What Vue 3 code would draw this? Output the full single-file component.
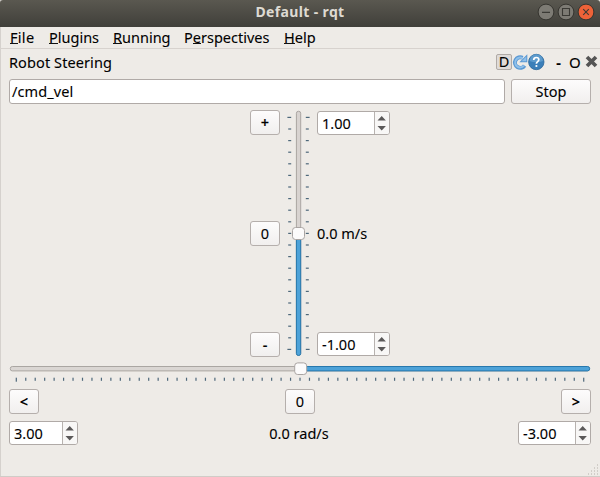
<script setup>
const menus = [
  { pre: '', key: 'F', post: 'ile', cls: 'file' },
  { pre: '', key: 'P', post: 'lugins', cls: 'plugins' },
  { pre: '', key: 'R', post: 'unning', cls: 'running' },
  { pre: 'P', key: 'e', post: 'rspectives', cls: 'persp' },
  { pre: '', key: 'H', post: 'elp', cls: 'help' },
]
const vTicks = Array.from({ length: 21 }, (_, i) => ({ y: 7.3 + i * 11.6, end: i === 0 || i === 20 }))
const hTicks = Array.from({ length: 61 }, (_, i) => ({ x: 7.3 + i * 9.457, end: i === 0 || i === 60 }))
</script>

<template>
  <div class="window">
    <header class="titlebar">
      <h1>Default - rqt</h1>
      <svg class="controls" width="60" height="20" viewBox="0 0 60 20">
        <g stroke="#35342f" stroke-width="1">
          <circle cx="10" cy="10" r="7.9" fill="#7d7b74" />
          <circle cx="30" cy="10" r="7.9" fill="#7d7b74" />
          <circle cx="50" cy="10" r="7.9" fill="#ee6238" />
        </g>
        <g fill="none" stroke="#3b3a35" stroke-width="1.1">
          <path d="M6 10.4h8M26.5 6.5h7v7h-7z" />
          <path d="M47.2 7.2l5.6 5.6M52.8 7.2l-5.6 5.6" />
        </g>
      </svg>
    </header>

    <nav class="menubar">
      <span v-for="m in menus" :key="m.cls" :class="['menu', m.cls]">{{ m.pre }}<u>{{ m.key }}</u>{{ m.post }}</span>
    </nav>

    <div class="dock">
      <span class="dock-title">Robot Steering</span>
      <span class="dbtn">D</span>
      <svg class="dock-icons" width="34" height="18" viewBox="0 0 34 18">
        <path d="M12.600 12.600A5.300 5.300 0 1 1 10.600 4.800" fill="none" stroke="#5a98d3" stroke-width="4" />
        <path d="M15.300 1.200v8H7.300z" fill="#5a98d3" />
        <path d="M11.800 12.700A4.900 4.900 0 1 1 10.600 5.300" fill="none" stroke="#8fc0ea" stroke-width="2" />
        <path d="M14.300 3.600v4.600H9.700z" fill="#8fc0ea" />
        <circle cx="24.300" cy="9" r="7.700" fill="#3b7fb9" stroke="#2c6799" stroke-width=".8" />
        <path d="M17.600 8a6.700 6.700 0 0 1 13.400 0q-6.700 2.400-13.400 0z" fill="#5d9bcd" />
        <path d="M21.700 7q.1-2.500 2.600-2.500t2.500 2.200c0 1.800-2.400 1.900-2.400 4" fill="none" stroke="#fff" stroke-width="1.700" />
        <circle cx="24.400" cy="13" r="1.100" fill="#fff" />
      </svg>
      <span class="minus">-</span>
      <span class="oh">O</span>
      <svg class="close" width="13" height="13" viewBox="0 0 13 13">
        <path d="M2 2l9 9M11 2l-9 9" stroke="#555" stroke-width="3.700" />
      </svg>
    </div>

    <div class="topic">
      <div class="field">/cmd_vel</div>
      <button class="btn stop">Stop</button>
    </div>

    <section class="linear">
      <div class="col">
        <button class="btn sign">+</button>
        <button class="btn">0</button>
        <button class="btn sign">-</button>
      </div>
      <svg class="vslider" width="25" height="247" viewBox="0 0 25 247">
        <g fill="#4e687b">
          <template v-for="t in vTicks" :key="t.y">
            <rect :x="t.end ? 1.4 : 2.2" :y="t.y - 0.5" :width="t.end ? 3.8 : 3" height="1.200" />
            <rect x="19.800" :y="t.y - 0.5" :width="t.end ? 3.8 : 3" height="1.200" />
          </template>
        </g>
        <rect x="10.400" y="1.300" width="4.300" height="244" rx="2" fill="#d8d3d0" stroke="#aaa5a2" />
        <path d="M10.400 124h4.300v119.500q0 2-2.150 2t-2.150-2z" fill="#4da2d8" stroke="#2778ad" />
        <rect x="6.500" y="117.500" width="12" height="12" rx="3" fill="#fcfbfb" stroke="#a9a4a2" />
      </svg>
      <div class="col values">
        <div class="spin">
          <span class="num">1.00</span>
          <svg viewBox="0 0 14 22"><path d="M2.500 8.500l4.200-4.600 4.200 4.600zM2.500 14h8.400l-4.200 4.600z" fill="#5b5959" /></svg>
        </div>
        <span class="speed">0.0 m/s</span>
        <div class="spin">
          <span class="num">-1.00</span>
          <svg viewBox="0 0 14 22"><path d="M2.500 8.500l4.200-4.600 4.200 4.600zM2.500 14h8.400l-4.200 4.600z" fill="#5b5959" /></svg>
        </div>
      </div>
    </section>

    <svg class="hslider" width="582" height="22" viewBox="0 0 582 22">
      <rect x="1.300" y="4.500" width="579" height="4.400" rx="2" fill="#dad6d3" stroke="#aaa6a2" />
      <path d="M291 4.500h287.500q2.200 0 2.200 2.200t-2.200 2.200h-287.500z" fill="#4da2d8" stroke="#2778ad" />
      <rect x="285.700" y=".9" width="12" height="11.600" rx="3" fill="#fcfbfb" stroke="#a9a4a2" />
      <g fill="#4e687b">
        <rect v-for="t in hTicks" :key="t.x" :x="t.x - 0.6" y="15.700" width="1.200" :height="t.end ? 4 : 3.1" />
      </g>
    </svg>

    <div class="turn">
      <button class="btn sign">&lt;</button>
      <button class="btn">0</button>
      <button class="btn sign">&gt;</button>
    </div>

    <div class="angular">
      <div class="spin narrow">
        <span class="num">3.00</span>
        <svg viewBox="0 0 14 22"><path d="M2.500 8.500l4.200-4.600 4.200 4.600zM2.500 14h8.400l-4.200 4.600z" fill="#5b5959" /></svg>
      </div>
      <span class="rad">0.0 rad/s</span>
      <div class="spin">
        <span class="num">-3.00</span>
        <svg viewBox="0 0 14 22"><path d="M2.500 8.500l4.200-4.600 4.200 4.600zM2.500 14h8.400l-4.200 4.600z" fill="#5b5959" /></svg>
      </div>
    </div>

    <svg class="grip" width="12" height="12" viewBox="0 0 12 12">
      <path d="M10 1h1M7 4h1M10 4h1M4 7h1M7 7h1M10 7h1M1 10h1M4 10h1M7 10h1M10 10h1" stroke="#b5b0aa" />
    </svg>
  </div>
</template>

<style>
html,
body {
  background: #eeebe7;
  overflow: hidden;
}
</style>

<style scoped>
.window {
  position: relative;
  box-sizing: border-box;
  width: 600px;
  height: 477px;
  background: #eeebe7;
  border-bottom: 1px solid #d0ccc7;
  box-shadow: inset 1px 0 #d5d1cd;
  font-family: "Noto Sans", sans-serif;
  font-size: 14.5px;
  line-height: 20px;
  color: #000;
  -webkit-text-stroke: .1px #000;
  white-space: nowrap;
  overflow: hidden;
}
.titlebar {
  display: grid;
  grid-template-columns: 1fr auto 1fr;
  align-items: center;
  height: 27px;
  box-sizing: border-box;
  padding-right: 4px;
  background: linear-gradient(#5a5850, #403f3a);
  border-radius: 3px 3px 0 0;
}
h1 {
  grid-column: 2;
  margin: 0 0 3px 4px;
  font-size: 14px;
  line-height: 20px;
  font-weight: 700;
  color: #dedad2;
  letter-spacing: .36px;
  -webkit-text-stroke: 0;
}
.controls {
  justify-self: end;
  margin-bottom: 3px;
}
.menubar {
  display: flex;
  box-sizing: border-box;
  height: 22px;
  padding-left: 10px;
  border-bottom: 1px solid #d7d2ce;
}
.menu {
  line-height: 21px;
}
.menu u {
  text-decoration: none;
  display: inline-block;
  height: 16px;
  border-bottom: 1px solid #111;
  line-height: 21px;
}
.file { width: 39px; letter-spacing: .3px; }
.plugins { width: 64px; }
.running { width: 71px; }
.persp { width: 100px; }
.dock {
  display: flex;
  align-items: center;
  height: 30px;
  box-sizing: border-box;
  padding: 0 2px 3px 9px;
}
.dock-title {
  flex: 1;
  letter-spacing: .1px;
  padding-bottom: 2px;
}
.dbtn {
  box-sizing: border-box;
  width: 16px;
  height: 16px;
  margin-top: -1px;
  border: 1px solid #b0aaa6;
  border-radius: 2px;
  background: #dfdbd8;
  text-align: center;
  line-height: 13px;
}
.dock-icons { margin-top: -1px; }
.minus {
  width: 15px;
  margin: -2px 8px 0 0;
  text-align: right;
  font-weight: 700;
}
.oh {
  width: 16px;
  margin-top: -2px;
  font-size: 15px;
}
.close { margin-top: -2px; }
.topic {
  display: flex;
  gap: 6px;
  padding: 0 9px;
}
.field {
  flex: 1;
  box-sizing: border-box;
  height: 25px;
  border: 1px solid #b0aaa7;
  border-radius: 3px;
  background: #fff;
  padding-left: 2px;
  line-height: 23px;
  letter-spacing: .1px;
}
.btn {
  box-sizing: border-box;
  width: 30px;
  height: 25px;
  margin: 0;
  padding: 0 0 2px;
  border: 1px solid #b5afac;
  border-radius: 3px;
  background: linear-gradient(#fdfcfc, #f1efee);
  font: inherit;
  line-height: 20px;
  color: #000;
}
.turn .sign,
.linear .sign { font-weight: 600; }
.stop { width: 80px; }
.linear {
  display: grid;
  grid-template-columns: 30px 25px 73px;
  column-gap: 6px;
  height: 247px;
  margin: 6px 0 0 250px;
}
.col {
  display: flex;
  flex-direction: column;
  justify-content: space-between;
}
.values { padding: 1px 0; }
.speed { margin-top: -2px; }
.spin {
  display: flex;
  box-sizing: border-box;
  width: 73px;
  height: 24px;
  border: 1px solid #b0aaa7;
  border-radius: 3px;
  background: #fff;
}
.spin svg {
  flex: none;
  box-sizing: border-box;
  width: 15px;
  height: 22px;
  border-left: 1px solid #b7b2af;
  border-radius: 0 2px 2px 0;
  background: #f8f7f6;
}
.narrow { width: 69px; }
.num {
  flex: 1;
  padding-left: 4px;
  line-height: 23px;
}
.hslider {
  display: block;
  margin: 5px 0 0 9px;
}
.turn,
.angular {
  display: flex;
  justify-content: space-between;
  padding: 0 9px;
}
.turn { margin-top: 5px; }
.angular {
  margin-top: 7px;
  align-items: center;
}
.rad { margin: 0 0 0 2px; }
.grip {
  position: absolute;
  right: 1px;
  bottom: 0;
}
</style>
